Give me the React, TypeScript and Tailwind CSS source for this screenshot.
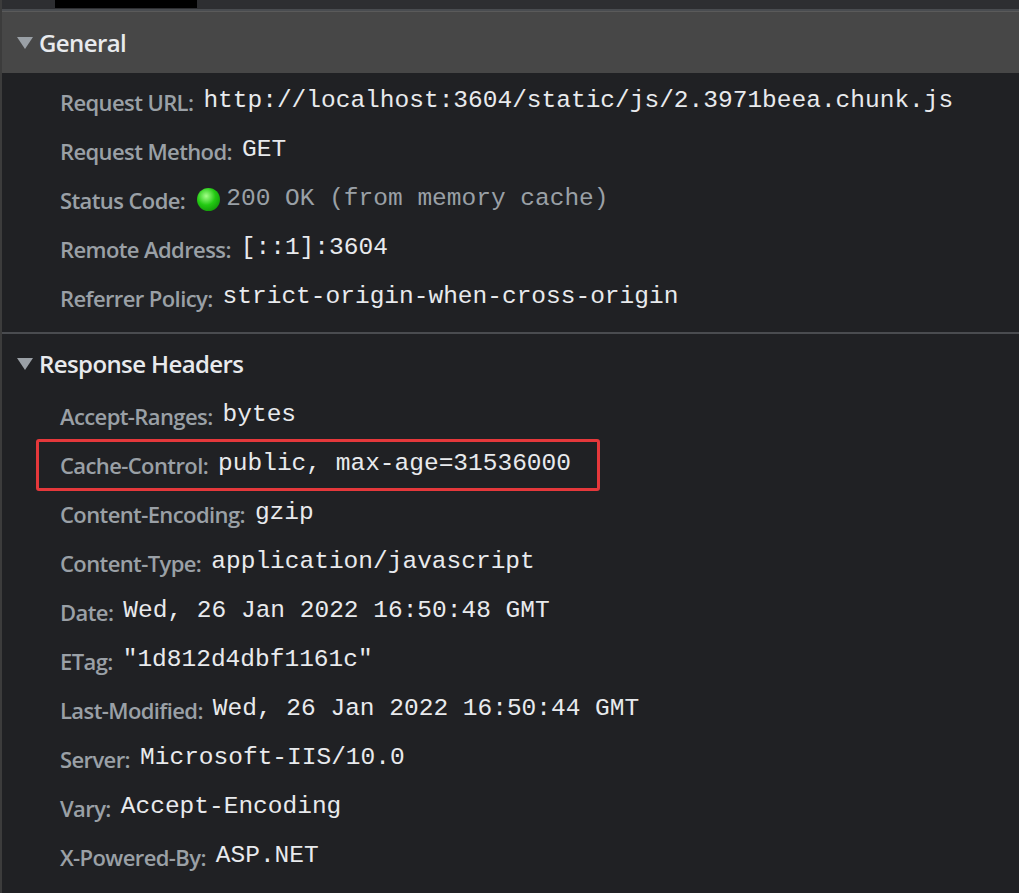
const general: [string, string][] = [
  ['Request URL', 'http://localhost:3604/static/js/2.3971beea.chunk.js'],
  ['Request Method', 'GET'],
  ['Status Code', 'status'],
  ['Remote Address', '[::1]:3604'],
  ['Referrer Policy', 'strict-origin-when-cross-origin'],
];

const headers: [string, string][] = [
  ['Accept-Ranges', 'bytes'],
  ['Cache-Control', 'public, max-age=31536000'],
  ['Content-Encoding', 'gzip'],
  ['Content-Type', 'application/javascript'],
  ['Date', 'Wed, 26 Jan 2022 16:50:48 GMT'],
  ['ETag', '"1d812d4dbf1161c"'],
  ['Last-Modified', 'Wed, 26 Jan 2022 16:50:44 GMT'],
  ['Server', 'Microsoft-IIS/10.0'],
  ['Vary', 'Accept-Encoding'],
  ['X-Powered-By', 'ASP.NET'],
];

const label = 'font-[Open_Sans] font-semibold text-[22px] leading-none text-[#9aa0a6] tracking-[-0.6px]';
const mono = 'font-[Liberation_Mono] text-[24.5px] leading-none text-[#e8eaed] ml-[10px] whitespace-pre';

function Row({ k, v, boxed }: { k: string; v: string; boxed?: boolean }) {
  return (
    <div className="h-[49px] flex items-center pl-[34px]">
      <div
        className={`flex items-center h-[52px] pl-[21px] pr-[26px] border-[3px] rounded-[3px] ${
          boxed ? 'border-[#e5383b]' : 'border-transparent'
        }`}
      >
        <span className={label}>{k}:</span>
        {v === 'status' ? (
          <span className="flex items-center ml-[12px]">
            <span className="w-[23px] h-[23px] rounded-full bg-[radial-gradient(circle_at_40%_35%,#a5ff8a,#22c912_45%,#0a7a05)]" />
            <span className="font-[Liberation_Mono] text-[24.5px] leading-none text-[#9aa0a6] ml-[6px] whitespace-pre">
              200 OK (from memory cache)
            </span>
          </span>
        ) : (
          <span className={mono}>{v}</span>
        )}
      </div>
    </div>
  );
}

function Section({ title }: { title: string }) {
  return (
    <div className="flex items-center pl-[14px] h-full">
      <svg width="18" height="14" viewBox="0 0 18 14">
        <path d="M1 1h16L9 13z" fill="#9aa0a6" />
      </svg>
      <span className="font-[Open_Sans] font-semibold text-[24px] text-[#e8eaed] ml-[5px] tracking-[-0.6px]">{title}</span>
    </div>
  );
}

export default function App() {
  return (
    <div className="w-[1019px] h-[893px] bg-[#202124] overflow-hidden border-l-2 border-[#3c3c3c]">
      <div className="h-[9px] bg-[#2d2e31] pl-[53px]">
        <div className="w-[142px] h-[8px] bg-black" />
      </div>
      <div className="h-[2px] bg-[#494c50]" />
      <div className="h-[62px] bg-[#474747] border-t border-[#5a5a5a]">
        <Section title="General" />
      </div>
      <div className="pt-[4px] pb-[10px]">
        {general.map(([k, v]) => (
          <Row key={k} k={k} v={v} />
        ))}
      </div>
      <div className="h-[2px] bg-[#4a4c50]" />
      <div className="h-[60px]">
        <Section title="Response Headers" />
      </div>
      <div className="-mt-[3px]">
        {headers.map(([k, v]) => (
          <Row key={k} k={k} v={v} boxed={k === 'Cache-Control'} />
        ))}
      </div>
    </div>
  );
}
